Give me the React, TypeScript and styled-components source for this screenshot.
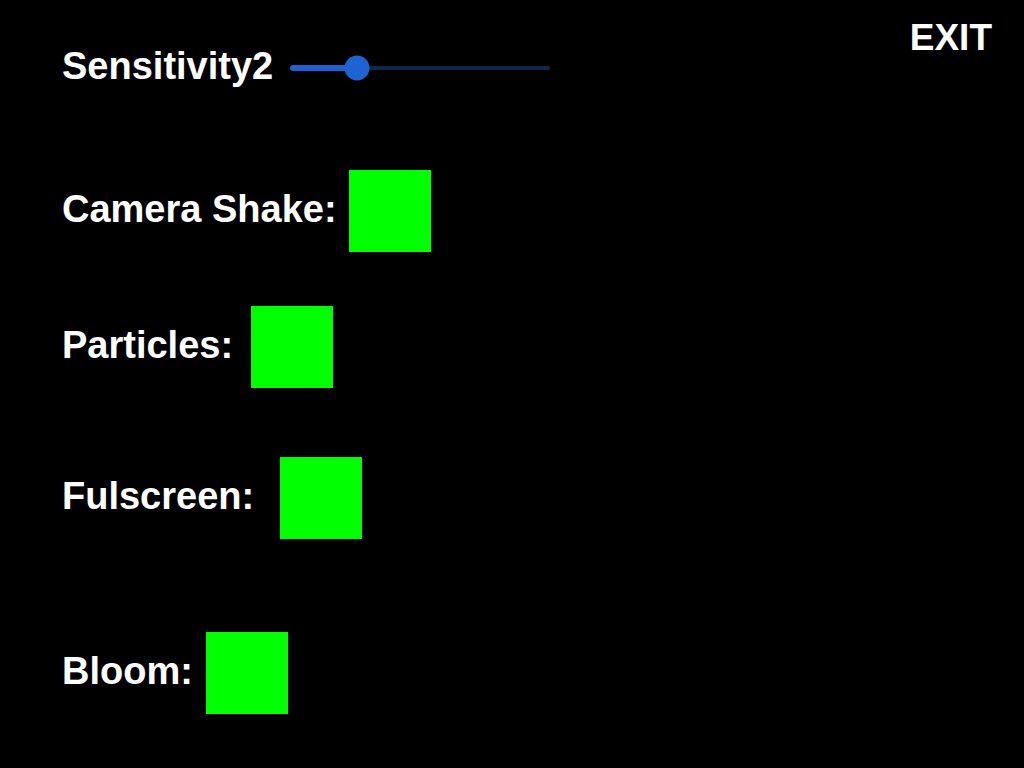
import React from 'react';
import styled, {createGlobalStyle} from 'styled-components';

const GlobalStyle = createGlobalStyle`
    html, body {
        margin: 0;
        padding: 0;
        background: #000;
    }
    body {
        font-family: "Liberation Sans", Arial, sans-serif;
    }
`;

const Page = styled.div`
    width: 1024px;
    height: 768px;
    background: #000;
    display: flex;
    justify-content: space-between;
    align-items: flex-start;
    box-sizing: border-box;
    padding: 0 32px 0 62px;
    overflow: hidden;
`;

const Settings = styled.div`
    display: flex;
    flex-direction: column;
    padding-top: 27px;
`;

const Row = styled.div<{$top: number}>`
    display: flex;
    align-items: center;
    height: 82px;
    margin-top: ${(p) => p.$top}px;
`;

const Label = styled.span`
    color: #fff;
    font-size: 38px;
    font-weight: 700;
    line-height: 1;
    padding-bottom: 5px;
    white-space: pre;
`;

const Toggle = styled.button<{$gap: number; $on: boolean}>`
    width: 82px;
    height: 82px;
    margin-left: ${(p) => p.$gap}px;
    border: none;
    padding: 0;
    background: ${(p) => (p.$on ? '#00ff00' : '#ff0000')};
    cursor: pointer;
`;

const Track = styled.div`
    position: relative;
    width: 260px;
    height: 4px;
    margin-left: 17px;
    background: #0d2849;
    border-radius: 2px;
`;

const Fill = styled.div`
    position: absolute;
    left: 0;
    top: -1px;
    height: 6px;
    background: #1f63d3;
    border-radius: 3px;
`;

const Thumb = styled.div`
    position: absolute;
    top: 50%;
    width: 25px;
    height: 25px;
    border-radius: 50%;
    background: #1f63d3;
    transform: translate(-50%, -50%);
`;

const ExitButton = styled.button`
    margin-top: 19px;
    padding: 0;
    border: none;
    background: none;
    color: #fff;
    font-family: "Liberation Sans", Arial, sans-serif;
    font-size: 37px;
    font-weight: 700;
    line-height: 1;
    cursor: pointer;
`;

const toggles = [
    {label: 'Camera Shake:', gap: 12, top: 61},
    {label: 'Particles:', gap: 18, top: 54},
    {label: 'Fulscreen:', gap: 26, top: 69},
    {label: 'Bloom:', gap: 13, top: 93},
];

const sensitivity = 67 / 260;

const App = () => {
    return (
        <>
            <GlobalStyle/>
            <Page>
                <Settings>
                    <Row $top={0}>
                        <Label>{'Sensitivity2'}</Label>
                        <Track>
                            <Fill style={{width: `${sensitivity * 100}%`}}/>
                            <Thumb style={{left: `${sensitivity * 100}%`}}/>
                        </Track>
                    </Row>
                    {toggles.map((t) => (
                        <Row
                            key={t.label}
                            $top={t.top}
                        >
                            <Label>{t.label}</Label>
                            <Toggle
                                $gap={t.gap}
                                $on={true}
                            />
                        </Row>
                    ))}
                </Settings>
                <ExitButton>{'EXIT'}</ExitButton>
            </Page>
        </>
    );
};

export default App;
